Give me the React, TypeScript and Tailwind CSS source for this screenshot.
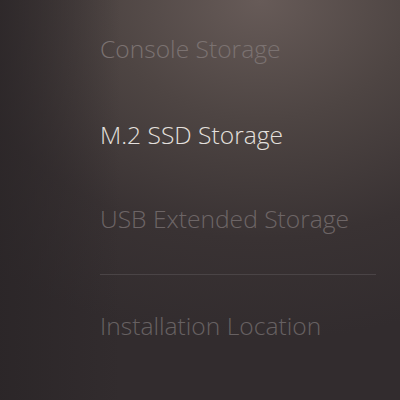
export default function App() {
  return (
    <div
      className="relative h-[400px] w-[400px] overflow-hidden bg-[radial-gradient(ellipse_110%_85%_at_65%_0%,#675b58_0%,#4e4543_35%,#393233_70%,#322c2e_100%)]"
      style={{ fontFamily: '"Open Sans", "Noto Sans", sans-serif' }}
    >
      {/* left vignette */}
      <div className="absolute inset-y-0 left-0 w-[120px] bg-gradient-to-r from-[#2a2527]/80 to-transparent" />
      <div className="relative flex flex-col pl-[100px] pt-[32px] font-light text-[24.6px] leading-[34px]">
        <div className="text-[#7b7271]">Console Storage</div>
        <div className="mt-[52px] text-[#e4e0de]">M.2 SSD Storage</div>
        <div className="mt-[50px] text-[#6d6566]">USB Extended Storage</div>
        <div className="mt-[38px] mr-[24px] h-px bg-[#4a4446]" />
        <div className="mt-[34px] text-[#676162]">Installation Location</div>
      </div>
    </div>
  );
}
